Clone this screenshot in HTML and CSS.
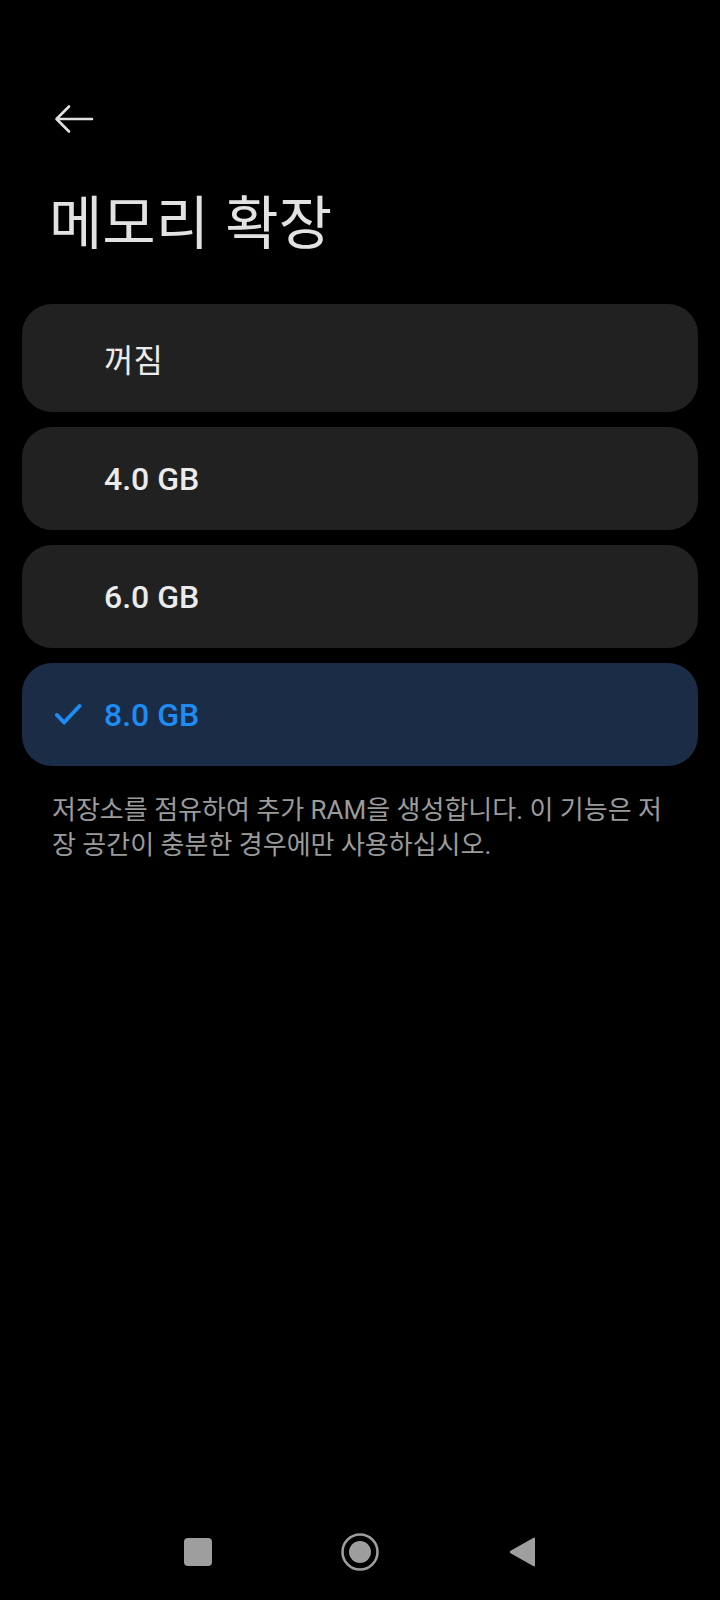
FILE: index.html
```html
<!DOCTYPE html>
<html lang="ko">
<head>
  <meta charset="UTF-8" />
  <title>메모리 확장</title>
  <meta name="viewport" content="width=device-width, initial-scale=1.0" />
  <link rel="stylesheet" href="styles.css">
</head>

<body>
  <div class="screen">
    <div class="toolbar">
      <button class="back-btn" aria-label="뒤로">
        <svg width="40" height="30" viewBox="0 0 40 30">
          <path d="M3 15 H38 M15 2.5 L2.5 15 L15 27.5" fill="none" stroke="#e0e0e0" stroke-width="2.6" stroke-linecap="round" stroke-linejoin="round"/>
        </svg>
      </button>
    </div>

    <h1 class="title">메모리 확장</h1>

    <div class="options">
      <div class="option">
        <span class="check"></span>
        <span class="label label-ko">꺼짐</span>
      </div>
      <div class="option">
        <span class="check"></span>
        <span class="label">4.0 GB</span>
      </div>
      <div class="option">
        <span class="check"></span>
        <span class="label">6.0 GB</span>
      </div>
      <div class="option selected">
        <span class="check">
          <svg width="28" height="24" viewBox="0 0 28 24">
            <path d="M3 12 L10 19.5 L25.5 3" fill="none" stroke="#1d8cf4" stroke-width="4" stroke-linecap="round" stroke-linejoin="round"/>
          </svg>
        </span>
        <span class="label">8.0 GB</span>
      </div>
    </div>

    <p class="note">
      저장소를 점유하여 추가 RAM을 생성합니다. 이 기능은 저장 공간이 충분한 경우에만 사용하십시오.
    </p>

    <!-- system navigation bar -->
    <div class="navbar">
      <span class="nav-btn">
        <svg width="40" height="40" viewBox="0 0 40 40">
          <rect x="6" y="6" width="28" height="28" rx="4" fill="#9e9e9e"/>
        </svg>
      </span>
      <span class="nav-btn">
        <svg width="40" height="40" viewBox="0 0 40 40">
          <circle cx="20" cy="20" r="17.5" fill="none" stroke="#9e9e9e" stroke-width="2.6"/>
          <circle cx="20" cy="20" r="11" fill="#9e9e9e"/>
        </svg>
      </span>
      <span class="nav-btn">
        <svg width="40" height="40" viewBox="0 0 40 40">
          <path d="M33 6.5 V33.5 Q33 35 31.6 34.2 L8.5 21.2 Q7 20 8.5 18.8 L31.6 5.8 Q33 5 33 6.5 Z" fill="#9e9e9e"/>
        </svg>
      </span>
    </div>
  </div>
</body>
</html>
```

FILE: styles.css
```css
body {
  margin: 0;
  background: #000;
  color: #e6e6e6;
  font-family: Roboto, "Noto Sans CJK KR", sans-serif;
}

.screen {
  min-height: 1600px;
  display: flex;
  flex-direction: column;
  padding: 0 22px;
  box-sizing: border-box;
}

.toolbar {
  padding-top: 104px;
  padding-left: 32px;
  height: 32px;
}

.back-btn {
  background: none;
  border: none;
  padding: 0;
  display: block;
  cursor: pointer;
}

.title {
  font-family: "Noto Sans CJK KR", sans-serif;
  font-weight: 400;
  font-size: 58px;
  line-height: 1.2;
  color: #e2e2e2;
  margin: 49px 0 49px 27px;
}

.options {
  display: flex;
  flex-direction: column;
  gap: 15px;
}

.option {
  display: flex;
  align-items: center;
  background: #212121;
  border-radius: 30px;
  padding: 33px 0 32px 32px;
  font-size: 32px;
  font-weight: 500;
  line-height: normal;
  color: #ebebeb;
}

.label-ko {
  font-weight: 400;
  margin: -2px 0 -1px;
}

.check {
  width: 50px;
  display: flex;
  align-items: center;
}

.option.selected {
  background: #1b2c47;
  color: #1d8cf4;
}

.note {
  margin: 27px 30px 0;
  font-size: 26px;
  line-height: 35px;
  color: #9b9b9b;
}

.navbar {
  margin-top: auto;
  height: 96px;
  display: flex;
  justify-content: center;
  align-items: center;
  gap: 122px;
}

.nav-btn {
  display: block;
  width: 40px;
  height: 40px;
}
```
